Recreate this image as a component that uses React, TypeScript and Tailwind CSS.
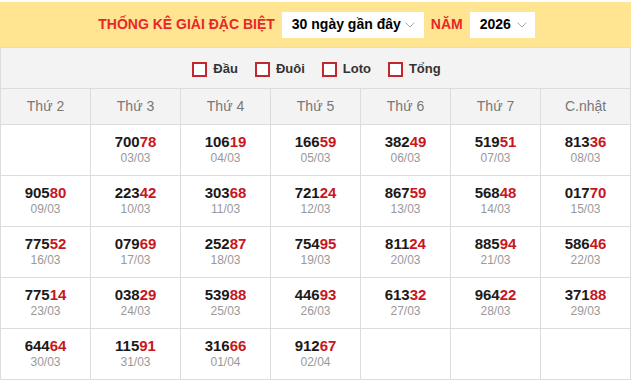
const days = ['Thứ 2', 'Thứ 3', 'Thứ 4', 'Thứ 5', 'Thứ 6', 'Thứ 7', 'C.nhật']

type Cell = { num: string; date: string } | null

const rows: Cell[][] = [
  [
    null,
    { num: '70078', date: '03/03' },
    { num: '10619', date: '04/03' },
    { num: '16659', date: '05/03' },
    { num: '38249', date: '06/03' },
    { num: '51951', date: '07/03' },
    { num: '81336', date: '08/03' },
  ],
  [
    { num: '90580', date: '09/03' },
    { num: '22342', date: '10/03' },
    { num: '30368', date: '11/03' },
    { num: '72124', date: '12/03' },
    { num: '86759', date: '13/03' },
    { num: '56848', date: '14/03' },
    { num: '01770', date: '15/03' },
  ],
  [
    { num: '77552', date: '16/03' },
    { num: '07969', date: '17/03' },
    { num: '25287', date: '18/03' },
    { num: '75495', date: '19/03' },
    { num: '81124', date: '20/03' },
    { num: '88594', date: '21/03' },
    { num: '58646', date: '22/03' },
  ],
  [
    { num: '77514', date: '23/03' },
    { num: '03829', date: '24/03' },
    { num: '53988', date: '25/03' },
    { num: '44693', date: '26/03' },
    { num: '61332', date: '27/03' },
    { num: '96422', date: '28/03' },
    { num: '37188', date: '29/03' },
  ],
  [
    { num: '64464', date: '30/03' },
    { num: '11591', date: '31/03' },
    { num: '31666', date: '01/04' },
    { num: '91267', date: '02/04' },
    null,
    null,
    null,
  ],
]

const filters = ['Đầu', 'Đuôi', 'Loto', 'Tổng']

function Chevron() {
  return (
    <svg width="10" height="6" viewBox="0 0 10 6" className="shrink-0">
      <polyline points="0.5,0.5 5,5 9.5,0.5" fill="none" stroke="#aaaaaa" strokeWidth="1" />
    </svg>
  )
}

export default function App() {
  return (
    <div className="w-[631px] mt-[2px] font-['Liberation_Sans',Arial,sans-serif]">
      {/* tiêu đề */}
      <div className="h-[45px] bg-[#ffe491] flex items-center justify-center gap-[7px] pl-[2px]">
        <span className="text-[14px] font-bold text-[#e8262b]">THỐNG KÊ GIẢI ĐẶC BIỆT</span>
        <div className="w-[142px] h-[26px] bg-white flex items-center justify-between pl-[10px] pr-[9px]">
          <span className="text-[14px] font-bold text-black">30 ngày gần đây</span>
          <Chevron />
        </div>
        <span className="text-[14px] font-bold text-[#e8262b]">NĂM</span>
        <div className="w-[65px] h-[26px] bg-white flex items-center justify-between pl-[10px] pr-[8px]">
          <span className="text-[14px] font-bold text-black">2026</span>
          <Chevron />
        </div>
      </div>

      <div className="grid grid-cols-7 gap-px p-px bg-[#dcdcdc]">
        {/* bộ lọc */}
        <div className="col-span-7 h-[40px] bg-[#f3f3f3] flex items-center justify-center gap-[17px] pt-[2px] pl-[2px]">
          {filters.map(f => (
            <label key={f} className="flex items-center gap-[6px]">
              <span className="w-[15px] h-[15px] border-2 border-[#c1272d] bg-white" />
              <span className="text-[13px] font-bold text-[#333]">{f}</span>
            </label>
          ))}
        </div>

        {/* thứ */}
        {days.map(d => (
          <div key={d} className="h-[35px] bg-[#f3f3f3] flex items-center justify-center text-[14px] text-[#777]">
            {d}
          </div>
        ))}

        {/* kết quả */}
        {rows.flat().map((c, i) => (
          <div key={i} className="h-[50px] bg-white flex flex-col items-center justify-center pb-[2px]">
            {c && (
              <>
                <div className="text-[15px] leading-[18px] font-bold text-[#1a1a1a]">
                  {c.num.slice(0, 3)}
                  <span className="text-[#c8161d]">{c.num.slice(3)}</span>
                </div>
                <div className="text-[12px] leading-[14px] text-[#999]">{c.date}</div>
              </>
            )}
          </div>
        ))}
      </div>
    </div>
  )
}
